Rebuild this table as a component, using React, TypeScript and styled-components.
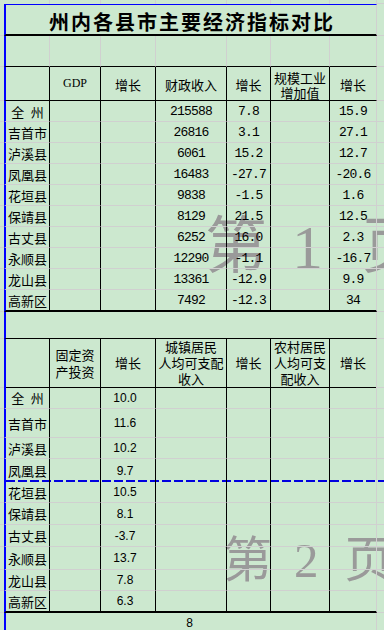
import React from 'react';
import styled, { createGlobalStyle, css } from 'styled-components';

const GRID = '#d0d0d0';
const PAGE = '#0000ff';
const GREEN = '#cce8cf';

type Line = 'gray' | 'black' | 'thick' | 'none' | 'break';
type Cols = 'black' | 'gray' | 'none';
type Kind = 'cjk' | 'mono' | 'sans' | 'serif';

const GlobalStyle = createGlobalStyle`
  html, body {
    margin: 0;
    padding: 0;
    background: ${GREEN};
  }
  body {
    font-family: "Noto Sans CJK SC", sans-serif;
    color: #000;
  }
`;

const fonts = {
  cjk: css`
    font-family: "Noto Sans CJK SC", sans-serif;
    font-size: 13px;
  `,
  mono: css`
    font-family: "Liberation Mono", monospace;
    font-size: 13px;
    letter-spacing: -0.8px;
  `,
  sans: css`
    font-family: "Liberation Sans", Arial, sans-serif;
    font-size: 12px;
  `,
  serif: css`
    font-family: "Liberation Serif", serif;
    font-size: 12px;
  `,
};

const bottomLine = (l: Line) => {
  switch (l) {
    case 'gray':
      return `1px solid ${GRID}`;
    case 'black':
      return '1px solid #000';
    case 'thick':
      return '2px solid #000';
    default:
      return 'none';
  }
};

const colLine = (c: Cols) => {
  if (c === 'black') return '1px solid #000';
  if (c === 'gray') return `1px solid ${GRID}`;
  return 'none';
};

const Screen = styled.div`
  position: relative;
  width: 384px;
  height: 630px;
  overflow: hidden;
  background: ${GREEN};
`;

const Sheet = styled.div`
  position: relative;
  z-index: 1;
  display: flex;
  flex-direction: column;
`;

// one spreadsheet row: outside strip | A..G | outside strip
const Row = styled.div<{ $h: number; $line: Line; $cols: Cols }>`
  display: grid;
  grid-template-columns: 4px 46px 51px 55px 71px 44px 59px 47px 1fr;
  height: ${p => p.$h}px;
  flex: none;
  ${p =>
    p.$line === 'break' &&
    css`
      background: repeating-linear-gradient(90deg, #0000e0 0 9px, transparent 9px 12px) 6px 100% /
        calc(100% - 6px) 2px no-repeat;
    `}

  & > * {
    box-sizing: border-box;
    min-width: 0;
    border-bottom: ${p => bottomLine(p.$line)};
    border-right: ${p => colLine(p.$cols)};
  }
  & > :first-child,
  & > :last-child {
    border-right: none;
    border-bottom: ${p => (p.$line === 'break' ? 'none' : `1px solid ${GRID}`)};
  }
  & > :nth-child(2) {
    border-left: 2px solid ${PAGE};
  }
  & > :nth-last-child(2) {
    border-right: 1px solid ${GRID};
  }
`;

const TopStrip = styled(Row)`
  && > :nth-child(2) {
    border-left: none;
  }
  && > :first-child {
    border-bottom: none;
  }
`;

const Side = styled.div``;

const Cell = styled.div<{ $kind?: Kind; $padR?: number }>`
  display: flex;
  align-items: center;
  justify-content: center;
  text-align: center;
  white-space: nowrap;
  overflow: hidden;
  padding-right: ${p => p.$padR ?? 0}px;
  ${p => fonts[p.$kind ?? 'cjk']}
`;

const Head = styled(Cell)<{ $lh: number; $padT?: number }>`
  white-space: normal;
  overflow: visible;
  line-height: ${p => p.$lh}px;
  padding-top: ${p => p.$padT ?? 0}px;
`;

const Merged = styled(Cell)`
  grid-column: span 7;
`;

const Title = styled(Merged)`
  border-top: 1px solid ${PAGE};
  padding-top: 4px;
  padding-left: 2px;
  font-size: 20px;
  font-weight: 700;
  letter-spacing: 2px;
`;

const Footer = styled(Merged)`
  padding-right: 3px;
`;

const Watermark = styled.div<{ $top: number; $left: number; $size: number }>`
  position: absolute;
  z-index: 0;
  top: ${p => p.$top}px;
  left: ${p => p.$left}px;
  display: flex;
  align-items: baseline;
  font-size: ${p => p.$size}px;
  color: #9a9a9a;
  white-space: nowrap;
  pointer-events: none;
`;

const WmHan = styled.span`
  font-family: "Noto Sans CJK SC", sans-serif;
  line-height: 1;
`;

const WmNum = styled.span<{ $l: number; $r: number }>`
  font-family: "Liberation Serif", serif;
  line-height: 1;
  margin: 0 ${p => p.$r}px 0 ${p => p.$l}px;
`;

const firstTable = [
  ['全\u2002州', '215588', '7.8', '15.9'],
  ['吉首市', '26816', '3.1', '27.1'],
  ['泸溪县', '6061', '15.2', '12.7'],
  ['凤凰县', '16483', '-27.7', '-20.6'],
  ['花垣县', '9838', '-1.5', '1.6'],
  ['保靖县', '8129', '21.5', '12.5'],
  ['古丈县', '6252', '16.0', '2.3'],
  ['永顺县', '12290', '-1.1', '-16.7'],
  ['龙山县', '13361', '-12.9', '9.9'],
  ['高新区', '7492', '-12.3', '34'],
];

const secondTable: { name: string; val: string; h: number; line: Line }[] = [
  { name: '全\u2002州', val: '10.0', h: 22, line: 'gray' },
  { name: '吉首市', val: '11.6', h: 29, line: 'gray' },
  { name: '泸溪县', val: '10.2', h: 21, line: 'gray' },
  { name: '凤凰县', val: '9.7', h: 23, line: 'break' },
  { name: '花垣县', val: '10.5', h: 21, line: 'gray' },
  { name: '保靖县', val: '8.1', h: 22, line: 'gray' },
  { name: '古丈县', val: '-3.7', h: 22, line: 'gray' },
  { name: '永顺县', val: '13.7', h: 23, line: 'gray' },
  { name: '龙山县', val: '7.8', h: 21, line: 'gray' },
  { name: '高新区', val: '6.3', h: 22, line: 'thick' },
];

const lines = (text: string) =>
  text.split('\n').map((t, i, all) => (
    <React.Fragment key={i}>
      {t}
      {i < all.length - 1 && <br />}
    </React.Fragment>
  ));

export default function App() {
  return (
    <>
      <GlobalStyle />
      <Screen>
        <Sheet>
          <TopStrip $h={4} $line="none" $cols="gray">
            <Side />
            <Cell />
            <Cell />
            <Cell />
            <Cell />
            <Cell />
            <Cell />
            <Cell />
            <Side />
          </TopStrip>

          <Row $h={32} $line="thick" $cols="none">
            <Side />
            <Title>州内各县市主要经济指标对比</Title>
            <Side />
          </Row>

          <Row $h={31} $line="black" $cols="gray">
            <Side />
            <Cell />
            <Cell />
            <Cell />
            <Cell />
            <Cell />
            <Cell />
            <Cell />
            <Side />
          </Row>

          <Row $h={34} $line="black" $cols="black">
            <Side />
            <Cell />
            <Cell $kind="serif">GDP</Cell>
            <Head $lh={15} $padT={2}>增长</Head>
            <Head $lh={15} $padT={2}>财政收入</Head>
            <Head $lh={15} $padT={2}>增长</Head>
            <Head $lh={15} $padT={2}>{lines('规模工业\n增加值')}</Head>
            <Head $lh={15} $padT={2}>增长</Head>
            <Side />
          </Row>

          {firstTable.map((r, i) => {
            const last = i === firstTable.length - 1;
            return (
              <Row key={r[0]} $h={last ? 22 : 21} $line={last ? 'thick' : 'gray'} $cols="black">
                <Side />
                <Cell>{r[0]}</Cell>
                <Cell />
                <Cell />
                <Cell $kind="mono">{r[1]}</Cell>
                <Cell $kind="mono">{r[2]}</Cell>
                <Cell />
                <Cell $kind="mono">{r[3]}</Cell>
                <Side />
              </Row>
            );
          })}

          <Row $h={27} $line="black" $cols="none">
            <Side />
            <Merged />
            <Side />
          </Row>

          <Row $h={48} $line="black" $cols="black">
            <Side />
            <Cell />
            <Head $lh={17}>{lines('固定资\n产投资')}</Head>
            <Head $lh={16}>增长</Head>
            <Head $lh={16}>{lines('城镇居民\n人均可支配\n收入')}</Head>
            <Head $lh={16}>增长</Head>
            <Head $lh={16}>{lines('农村居民\n人均可支\n配收入')}</Head>
            <Head $lh={16}>增长</Head>
            <Side />
          </Row>

          {secondTable.map(r => (
            <Row key={r.name} $h={r.h} $line={r.line} $cols="black">
              <Side />
              <Cell>{r.name}</Cell>
              <Cell />
              <Cell $kind="sans" $padR={6}>
                {r.val}
              </Cell>
              <Cell />
              <Cell />
              <Cell />
              <Cell />
              <Side />
            </Row>
          ))}

          <Row $h={20} $line="none" $cols="none">
            <Side />
            <Footer $kind="sans">8</Footer>
            <Side />
          </Row>
        </Sheet>

        <Watermark $top={210} $left={205} $size={62}>
          <WmHan>第</WmHan>
          <WmNum $l={25} $r={39}>1</WmNum>
          <WmHan>页</WmHan>
        </Watermark>
        <Watermark $top={531} $left={223} $size={49}>
          <WmHan>第</WmHan>
          <WmNum $l={22} $r={26}>2</WmNum>
          <WmHan>页</WmHan>
        </Watermark>
      </Screen>
    </>
  );
}
